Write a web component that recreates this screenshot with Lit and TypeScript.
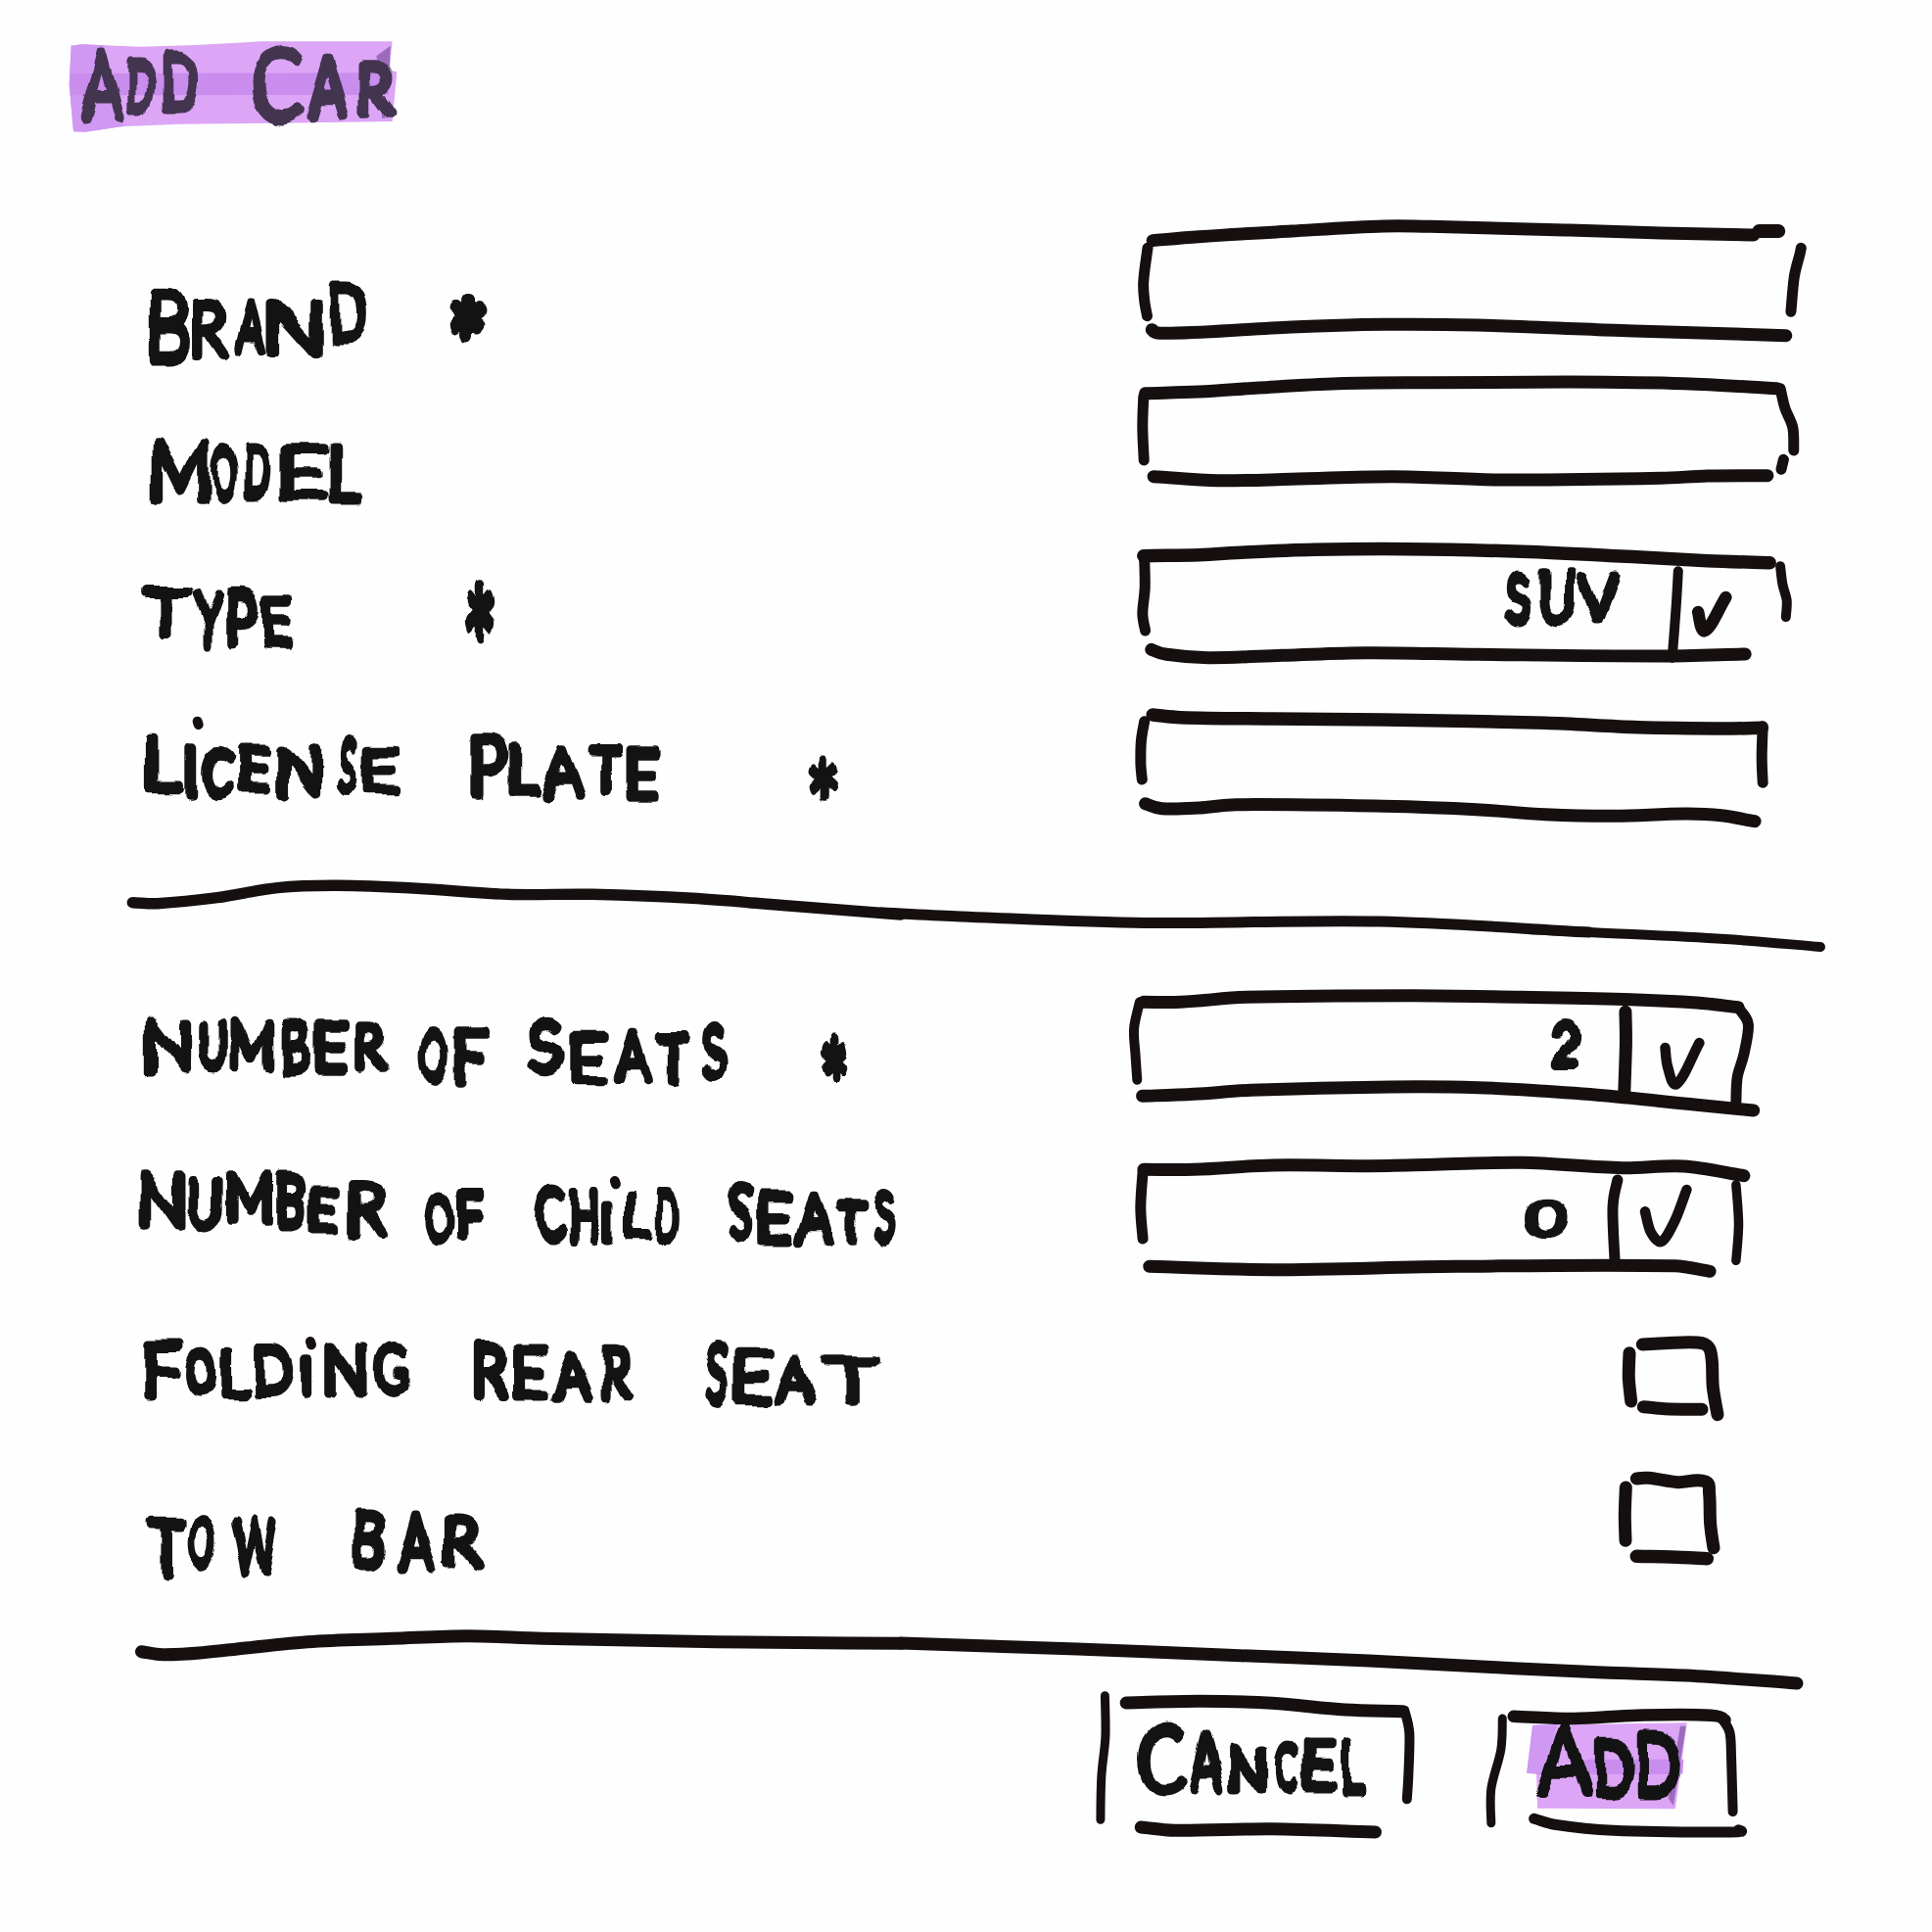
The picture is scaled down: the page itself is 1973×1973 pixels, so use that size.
import { LitElement, html, svg, css } from "lit";
import { customElement, property } from "lit/decorators.js";

/* ---------- drawing grids: origin on the page and units per pixel ---------- */
interface Grid { ox: number; oy: number; kx: number; ky: number; }
const grid = (ox: number, oy: number, w: number): Grid => ({ ox, oy, kx: Math.min(3, 1568 / w), ky: 3 });
const TOP = grid(50, 20, 480);
const F1 = grid(1130, 210, 740);
const F2 = grid(1130, 540, 740);
const L2 = grid(120, 570, 800);
const L3 = grid(120, 1010, 840);
const F3 = grid(1130, 1000, 700);
const L4 = grid(120, 1340, 800);
const BOX = grid(1600, 1340, 240);
const FOOT = grid(1100, 1680, 780);
const PAGE: Grid = { ox: 0, oy: 0, kx: 1, ky: 1 };

type Stroke = { pts: string; w: number; g: Grid };
type Word = { text: string; boxes: string; g: Grid; pen?: number };

const s = (g: Grid, w: number, pts: string): Stroke => ({ g, w, pts });
const word = (g: Grid, text: string, boxes: string, pen = 9): Word => ({ g, text, boxes, pen });

const toPage = (g: Grid, pts: string): [number, number][] =>
  pts.trim().split(/\s+/).map((p) => {
    const [x, y] = p.split(",").map(Number);
    return [g.ox + x / g.kx, g.oy + y / g.ky];
  });

/** Smooth curve through the points (Catmull-Rom to Bezier). */
function curve(p: [number, number][]): string {
  const f = (n: number) => n.toFixed(1);
  let d = `M${f(p[0][0])} ${f(p[0][1])}`;
  for (let i = 0; i < p.length - 1; i++) {
    const a = p[i - 1] ?? p[i], b = p[i], c = p[i + 1], e = p[i + 2] ?? c;
    const step = c[0] - b[0];
    const k = Math.abs(step) > 20 ? Math.abs(step) / (Math.abs(c[0] - a[0]) + 0.01) : 0.5;
    const m = Math.abs(step) > 20 ? Math.abs(step) / (Math.abs(e[0] - b[0]) + 0.01) : 0.5;
    d += `C${f(b[0] + ((c[0] - a[0]) * k) / 3)} ${f(b[1] + ((c[1] - a[1]) * k) / 3)} ${f(c[0] - ((e[0] - b[0]) * m) / 3)} ${f(c[1] - ((e[1] - b[1]) * m) / 3)} ${f(c[0])} ${f(c[1])}`;
  }
  return d;
}

const drawStroke = (k: Stroke) =>
  svg`<path class="line" d=${curve(toPage(k.g, k.pts))} stroke-width=${k.w >= 11.5 ? k.w + 1 : k.w}></path>`;
const drawPoly = (g: Grid, pts: string, cls: string) =>
  svg`<polygon class=${cls} points=${toPage(g, pts).map((p) => p.join(",")).join(" ")}></polygon>`;

/* left bearing, ink share of the advance, ink height in em, advance in em */
const METRICS: Record<string, [number, number, number, number]> = {
  A: [0.02, 0.96, 0.717, 0.65], V: [0.02, 0.96, 0.717, 0.65], Y: [0.02, 0.96, 0.717, 0.6], T: [0.04, 0.92, 0.717, 0.58],
  W: [0.02, 0.96, 0.717, 1], O: [0.07, 0.86, 0.73, 0.79], C: [0.08, 0.86, 0.73, 0.66], G: [0.08, 0.81, 0.73, 0.71],
  L: [0.19, 0.76, 0.717, 0.46], E: [0.16, 0.74, 0.717, 0.57], F: [0.17, 0.74, 0.717, 0.56], S: [0.09, 0.82, 0.73, 0.54],
  P: [0.15, 0.78, 0.717, 0.59], R: [0.14, 0.82, 0.717, 0.61], B: [0.14, 0.78, 0.717, 0.63], D: [0.12, 0.81, 0.717, 0.74],
  U: [0.12, 0.76, 0.717, 0.71], N: [0.12, 0.76, 0.717, 0.74], M: [0.1, 0.8, 0.717, 0.9], H: [0.13, 0.74, 0.717, 0.74],
  I: [0.36, 0.3, 0.717, 0.27], "2": [0.09, 0.82, 0.725, 0.58], "0": [0.06, 0.88, 0.73, 0.58], "*": [0.1, 0.8, 0.32, 0.4],
};

function drawWord(k: Word) {
  const pen = k.pen ?? 9;
  const boxes = k.boxes.trim().split(/\s+/).map((b) => b.split(",").map(Number));
  return svg`<text class="word">${[...k.text].map((ch, i) => {
    const [l, t, r, b] = boxes[i];
    const x0 = k.g.ox + l / k.g.kx + pen / 2, x1 = k.g.ox + r / k.g.kx - pen / 2;
    const y0 = k.g.oy + t / k.g.ky + pen / 2, y1 = k.g.oy + b / k.g.ky - pen / 2;
    const [lead, ink, cap, natural] = METRICS[ch];
    const size = (y1 - y0) / cap;
    const adv = ch === "I" ? size * 0.24 : (x1 - x0) / ink;
    const x = ch === "I" ? (x0 + x1) / 2 - adv / 2 : x0 - adv * lead;
    const y = ch === "*" ? y1 + size * 0.42 : y1;
    /* glyphs squeezed sideways need a heavier pen, stretched ones a lighter one */
    const squeeze = adv / (size * natural);
    const nib = Math.min(pen * 1.2, Math.max(pen * 0.75, pen / Math.sqrt(squeeze)));
    return svg`<tspan x=${x.toFixed(1)} y=${y.toFixed(1)} font-size=${size.toFixed(1)} stroke-width=${nib.toFixed(1)} textLength=${adv.toFixed(1)} lengthAdjust="spacingAndGlyphs">${ch}</tspan>`;
  })}</text>`;
}

/** A piece of the sheet: takes its place in the flow and shows its own part of the page. */
@customElement("ink-area")
class InkArea extends LitElement {
  @property({ attribute: false }) view: [number, number, number, number] = [0, 0, 10, 10];
  @property({ attribute: false }) strokes: Stroke[] = [];
  @property({ attribute: false }) words: Word[] = [];
  @property({ attribute: false }) marker: unknown = null;
  @property() tone = "black";

  static styles = css`
    :host { display: block; flex: none; }
    .sheet { display: block; overflow: visible; }
    .line { fill: none; stroke: #15100f; stroke-linecap: round; stroke-linejoin: round; }
    .word {
      font-family: Lato, "Liberation Sans", sans-serif;
      font-weight: 300;
      fill: #131313;
      stroke: #131313;
      stroke-linejoin: round;
      stroke-linecap: round;
      white-space: pre;
    }
    .violet .word { fill: #43344f; stroke: #43344f; }
    .wash { fill: #dca5f6; }
    .wash-mid { fill: #c98dee; }
    .wash-soft { fill: #cf98f2; }
    .wash-deep { fill: #8d5db0; opacity: 0.8; }
  `;

  render() {
    const [x, y, w, h] = this.view;
    return html`<svg class="sheet ${this.tone}" width=${w} height=${h} viewBox="${x} ${y} ${w} ${h}">
      <defs>
        <filter id="hand" filterUnits="userSpaceOnUse" color-interpolation-filters="sRGB" x=${x - 60} y=${y - 60} width=${w + 120} height=${h + 120}>
          <feTurbulence type="fractalNoise" baseFrequency="0.03" numOctaves="1" seed="4"></feTurbulence>
          <feDisplacementMap in="SourceGraphic" scale="12" xChannelSelector="R" yChannelSelector="G"></feDisplacementMap>
          <feGaussianBlur stdDeviation="0.6"></feGaussianBlur>
        </filter>
      </defs>
      ${this.marker}
      ${this.strokes.map(drawStroke)}
      <g filter="url(#hand)">${this.words.map(drawWord)}</g>
    </svg>`;
  }
}

interface Row { top: number; height: number; words: Word[]; dots?: Stroke[]; field: Stroke[]; value?: Word[]; }

const dot = (g: Grid, x: number, y: number) => s(g, 10, `${x},${y - 5} ${x + 2},${y + 5}`);

const MAIN: Row[] = [
  {
    top: 210, height: 170,
    words: [
      word(TOP, "BRAND", "303,822,430,1058 430,852,552,1042 567,848,670,1025 665,855,842,1038 858,802,978,993"),
      word(TOP, "*", "1215,848,1345,992", 12),
    ],
    field: [
      s(F1, 12, "100,107 200,95 400,78 600,63 700,64 1000,75 1200,84 1400,90"),
      s(F1, 13, "1412,78 1454,78"),
      s(F1, 11, "89,130 80,230 82,290 88,338"),
      s(F1, 11, "1503,130 1500,150 1488,220 1481,325"),
      s(F1, 12, "98,380 140,391 400,372 600,364 800,366 1100,382 1470,398"),
    ],
  },
  {
    top: 380, height: 160,
    words: [word(TOP, "MODEL", "310,1277,495,1487 492,1303,582,1476 592,1290,685,1468 705,1297,853,1476 857,1295,963,1485")],
    field: [
      s(F1, 12, "84,575 200,570 330,558 500,545 700,542 1000,540 1250,545 1450,560"),
      s(F1, 11, "1458,560 1468,620 1485,680 1487,750"),
      s(F1, 11, "1465,778 1460,808"),
      s(F1, 11, "80,585 78,680 81,780"),
      s(F1, 12, "102,830 240,842 400,838 620,830 850,840 1200,835 1300,828 1430,827"),
    ],
  },
  {
    top: 540, height: 170,
    words: [
      word(L2, "TYPE", "48,82,150,250 150,95,213,280 215,88,285,278 288,110,353,280"),
      word(L2, "*", "687,70,763,275", 12),
    ],
    field: [
      s(F2, 12.5, "80,83 200,80 300,72 450,64 650,62 900,70 1100,83 1300,98 1435,104"),
      s(F2, 11, "82,95 83,180 78,260 84,312"),
      s(F2, 10, "1458,115 1463,170 1472,220 1470,270"),
      s(F2, 12, "97,370 130,385 220,395 380,388 560,380 800,385 1200,390 1382,384"),
      s(F2, 10, "1237,130 1232,250 1224,395"),
      s(F2, 11.5, "1280,255 1295,312 1340,210"),
    ],
    value: [word(F2, "SUV", "860,130,922,302 935,120,1015,292 1015,130,1110,292", 8.5)],
  },
  {
    top: 710, height: 150,
    words: [
      word(L2, "LICENSE", "55,530,130,720 128,570,163,740 165,570,235,732 240,572,307,722 318,568,410,735 437,547,483,722 490,577,563,727"),
      word(L2, "PLATE", "703,533,785,738 785,560,845,728 845,567,937,742 942,570,1012,727 1018,575,1085,750"),
      word(L2, "*", "1378,612,1447,757", 8),
    ],
    dots: [dot(L2, 160, 505)],
    field: [
      s(F2, 12.5, "100,570 160,578 350,582 600,585 950,595 1150,608 1350,612 1418,610"),
      s(F2, 11, "1420,605 1418,700 1420,778"),
      s(F2, 11, "82,590 75,650 74,720 77,768"),
      s(F2, 12, "84,842 120,857 200,855 280,845 600,850 800,860 950,875 1100,880 1250,873 1330,878 1403,896"),
    ],
  },
];

const EXTRAS: Row[] = [
  {
    top: 1000, height: 160,
    words: [
      word(L3, "NUMBER", "50,88,142,262 155,95,213,250 215,83,298,252 308,85,370,265 374,92,437,265 448,95,518,255"),
      word(L3, "OF", "573,122,632,285 640,115,708,298"),
      word(L3, "SEATS", "783,88,850,265 858,130,935,297 945,120,1022,293 1024,128,1093,292 1112,105,1163,280"),
      word(L3, "*", "1335,150,1398,297", 10),
    ],
    field: [
      s(F3, 12, "85,70 170,70 320,55 700,50 950,55 1200,62 1350,72 1445,86"),
      s(F3, 10, "76,70 63,150 66,230 70,308"),
      s(F3, 11, "1450,95 1468,140 1458,230 1443,300 1440,375"),
      s(F3, 12, "82,358 200,352 330,340 650,330 850,332 1000,343 1150,358 1350,385 1480,402"),
      s(F3, 12, "1187,100 1188,200 1184,362"),
      s(F3, 10.5, "1278,210 1284,270 1305,320 1356,195"),
    ],
    value: [word(F3, "2", "1017,115,1087,273", 9)],
  },
  {
    top: 1160, height: 180,
    words: [
      word(L3, "NUMBER", "40,557,130,743 132,572,203,740 205,557,297,722 300,560,360,733 362,600,425,747 440,588,513,767"),
      word(L3, "OF", "582,622,642,780 644,612,698,765"),
      word(L3, "CHILD", "795,600,858,777 860,612,922,780 926,650,945,782 965,612,1020,773 1024,612,1075,777", 8.5),
      word(L3, "SEATS", "1162,592,1213,770 1218,620,1288,787 1290,610,1365,787 1367,640,1432,787 1440,607,1490,785"),
    ],
    dots: [dot(L3, 948, 593)],
    field: [
      s(F3, 12, "85,583 200,583 380,570 600,572 750,568 950,562 1180,578 1320,573 1458,602"),
      s(F3, 11, "83,590 78,700 83,795"),
      s(F3, 9.5, "1440,630 1446,750 1440,862"),
      s(F3, 12, "98,880 380,890 800,880 1300,878 1380,895"),
      s(F3, 11, "1169,615 1158,700 1163,870"),
      s(F3, 10.5, "1232,712 1245,775 1270,803 1300,740 1327,645"),
    ],
    value: [word(F3, "0", "958,668,1055,798", 8)],
  },
  {
    top: 1340, height: 145,
    words: [
      word(L4, "FOLDING", "52,83,132,278 135,112,197,255 203,105,268,265 272,92,353,265 365,132,390,260 412,92,503,262 515,90,582,260"),
      word(L4, "REAR", "710,87,785,270 790,95,863,272 868,108,955,277 968,103,1033,275"),
      word(L4, "SEAT", "1175,82,1225,285 1230,112,1308,287 1312,135,1397,283 1415,127,1525,285"),
    ],
    dots: [dot(L4, 386, 95)],
    field: [
      s(BOX, 12, "192,125 190,200 197,273"),
      s(BOX, 12, "232,99 300,95 400,93 435,108 445,150 448,230 462,314"),
      s(BOX, 12, "235,290 300,296 414,298"),
    ],
  },
  {
    top: 1485, height: 155,
    words: [
      word(L4, "TOW", "60,625,135,810 137,617,202,787 223,627,325,808"),
      word(L4, "BAR", "470,600,537,787 558,610,640,800 650,620,732,788"),
    ],
    field: [
      s(BOX, 12, "181,537 178,620 180,700"),
      s(BOX, 12, "214,510 250,508 340,521 425,519 437,560 440,650 450,722"),
      s(BOX, 12.5, "214,748 320,750 430,755"),
    ],
  },
];

const DIVIDER_1: Stroke[] = [
  s(L2, 11.4, "30,1055 80,1058 200,1040 320,1010 440,1003 600,1012 780,1030 950,1030 1150,1042 1350,1066 1568,1092"),
  s(PAGE, 11, "900,932 981,936 1170,942.5 1409,941 1623,952"),
  s(PAGE, 10, "1560,949 1623,952 1762,959 1859,967"),
];
const DIVIDER_2: Stroke[] = [
  s(L4, 12, "48,1040 90,1049 170,1043 380,1010 550,1000 700,992 850,1000 1200,1010 1568,1015"),
  s(PAGE, 12, "920,1678 1100,1684 1249,1690 1398,1696 1523,1702.5 1637,1708 1722,1711 1835,1719"),
];

@customElement("app-root")
class AppRoot extends LitElement {
  static styles = css`
    :host { display: block; }
    .page {
      width: 1973px; height: 1973px; overflow: hidden; box-sizing: border-box;
      display: flex; flex-direction: column; background: #fefefe;
    }
    .heading { margin: 0; height: 190px; padding: 20px 0 0 50px; box-sizing: content-box; font-size: 16px; font-weight: 400; }
    .row { display: grid; grid-template-columns: 1010px 743px; padding-left: 120px; }
    .divider { padding-left: 120px; }
    .footer { display: flex; gap: 60px; padding-left: 1100px; }
  `;

  private row(r: Row) {
    return html`<div class="row">
      <ink-area .view=${[120, r.top, 1010, r.height]} .words=${r.words} .strokes=${r.dots ?? []}></ink-area>
      <ink-area .view=${[1130, r.top, 743, r.height]} .strokes=${r.field} .words=${r.value ?? []}></ink-area>
    </div>`;
  }

  render() {
    const titleMarker = svg`
      ${drawPoly(TOP, "68,80 100,76 280,83 450,78 650,67 1052,67 1042,155 1066,160 1052,312 800,316 400,320 220,328 110,344 75,343 62,200", "wash")}
      ${drawPoly(TOP, "68,80 100,76 170,79 150,160 140,240 190,260 230,327 110,344 75,343 62,200", "wash-soft")}
      ${drawPoly(TOP, "64,165 1044,163 1040,230 66,232", "wash-mid")}
      ${drawPoly(TOP, "1003,112 1046,80 1042,205 1025,200", "wash-deep")}
      ${drawPoly(TOP, "1018,235 1032,235 1030,302 1020,302", "wash-deep")}`;
    const addMarker = svg`
      ${drawPoly(FOOT, "935,245 1252,238 1228,502 945,500 943,395 923,392", "wash")}
      ${drawPoly(FOOT, "935,245 985,243 960,395 923,392", "wash-soft")}
      ${drawPoly(FOOT, "1050,350 1245,350 1243,395 940,395", "wash-mid")}
      ${drawPoly(FOOT, "1238,248 1250,248 1224,492 1214,470", "wash-deep")}`;
    return html`<main class="page">
      <h1 class="heading">
        <ink-area tone="violet" .view=${[50, 20, 480, 190]} .marker=${titleMarker} .words=${[
          word(TOP, "ADD", "92,85,235,315 235,118,332,288 345,98,460,280"),
          word(TOP, "CAR", "620,75,782,315 785,105,925,310 945,125,1065,300"),
        ]}></ink-area>
      </h1>
      ${MAIN.map((r) => this.row(r))}
      <div class="divider"><ink-area .view=${[120, 860, 1753, 140]} .strokes=${DIVIDER_1}></ink-area></div>
      ${EXTRAS.map((r) => this.row(r))}
      <div class="divider"><ink-area .view=${[120, 1640, 1753, 80]} .strokes=${DIVIDER_2}></ink-area></div>
      <div class="footer">
        <ink-area .view=${[1100, 1720, 360, 180]} .strokes=${[
          s(FOOT, 9, "57,155 58,280 50,400 48,535"),
          s(FOOT, 12, "101,177 250,172 400,178 550,198 668,203"),
          s(FOOT, 10, "672,200 682,270 680,400 677,472"),
          s(FOOT, 12, "131,558 200,568 400,563 612,573"),
        ]} .words=${[
          word(FOOT, "CANCEL", "123,237,226,458 228,262,305,458 310,308,392,458 402,290,456,452 460,285,532,450 540,285,593,465"),
        ]}></ink-area>
        <ink-area .view=${[1520, 1720, 320, 180]} .marker=${addMarker} .strokes=${[
          s(FOOT, 9, "873,225 870,320 850,440 850,545"),
          s(FOOT, 11.5, "896,218 1020,225 1150,215 1300,215 1330,230"),
          s(FOOT, 10, "1326,230 1340,270 1343,350 1346,510"),
          s(FOOT, 11, "938,532 980,550 1100,568 1340,573 1358,566"),
        ]} .words=${[
          word(FOOT, "ADD", "942,235,1058,470 1060,280,1145,465 1150,262,1238,468"),
        ]}></ink-area>
      </div>
    </main>`;
  }
}
